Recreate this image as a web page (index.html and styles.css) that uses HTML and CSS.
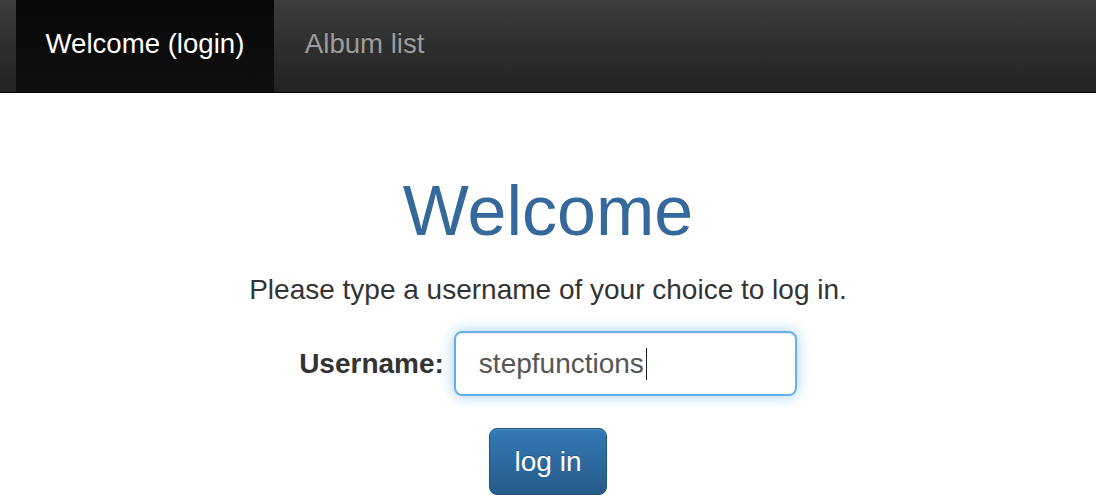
FILE: index.html
```html
<!DOCTYPE html>
<html lang="en">
<head>
<meta charset="utf-8">
<title>Welcome</title>
<link rel="stylesheet" href="styles.css">
</head>
<body>
<nav class="navbar">
  <ul class="nav">
    <li class="nav-item active"><a href="#">Welcome (login)</a></li>
    <li class="nav-item"><a href="#">Album list</a></li>
  </ul>
</nav>
<main class="main">
  <h1 class="title">Welcome</h1>
  <p class="lead">Please type a username of your choice to log in.</p>
  <form class="login-form">
    <div class="form-row">
      <label class="label" for="username">Username:</label>
      <div class="input" id="username">stepfunctions<span class="caret"></span></div>
    </div>
    <button class="btn" type="button">log in</button>
  </form>
</main>
</body>
</html>
```

FILE: styles.css
```css
html, body {
  margin: 0;
  padding: 0;
  background: #fff;
  font-family: "Liberation Sans", Arial, Helvetica, sans-serif;
  color: #333;
}

.navbar {
  height: 92px;
  border-bottom: 1px solid #080808;
  background: linear-gradient(to bottom, #3c3c3c 0, #222 100%);
  padding-left: 16px;
}

.nav {
  list-style: none;
  margin: 0;
  padding: 0;
  display: flex;
  height: 100%;
}

.nav-item a {
  display: block;
  height: 92px;
  box-sizing: border-box;
  padding: 25px 29.5px 0;
  font-size: 27.6px;
  line-height: 37px;
  color: #9d9d9d;
  text-decoration: none;
  text-shadow: 0 -1px 0 rgba(0, 0, 0, .25);
}

.nav-item.active a {
  color: #fff;
  background: linear-gradient(to bottom, #080808 0, #0f0f0f 100%);
}

.nav-item + .nav-item a {
  padding-left: 31px;
}

.main {
  display: flex;
  flex-direction: column;
  align-items: center;
  padding-top: 80px;
}

.title {
  margin: 0;
  font-size: 70px;
  line-height: 77px;
  font-weight: normal;
  color: #35689b;
}

.lead {
  margin: 20px 0 0;
  font-size: 28px;
  line-height: 40px;
}

.login-form {
  display: flex;
  flex-direction: column;
  align-items: center;
  margin-top: 21px;
}

.form-row {
  display: flex;
  align-items: center;
  gap: 10px;
}

.label {
  font-size: 28px;
  font-weight: bold;
  color: #333;
}

.input {
  width: 343px;
  height: 65px;
  box-sizing: border-box;
  padding: 0 23px;
  border: 2px solid #66afe9;
  border-radius: 8px;
  box-shadow: inset 0 1px 1px rgba(0, 0, 0, .075), 0 0 14px rgba(102, 175, 233, .6);
  font-size: 28px;
  color: #555;
  display: flex;
  align-items: center;
}

.caret {
  display: inline-block;
  width: 1px;
  height: 32px;
  background: #222;
  margin-left: 2px;
}

.btn {
  margin-top: 32px;
  height: 67px;
  padding: 0 25px;
  font-family: inherit;
  font-size: 28px;
  color: #fff;
  border: 1px solid #245580;
  border-radius: 8px;
  background: linear-gradient(to bottom, #337ab7 0, #265a88 100%);
  box-shadow: inset 0 1px 0 rgba(255, 255, 255, .15), 0 1px 2px rgba(0, 0, 0, .1);
  text-shadow: 0 -1px 0 rgba(0, 0, 0, .2);
  cursor: pointer;
}
```
